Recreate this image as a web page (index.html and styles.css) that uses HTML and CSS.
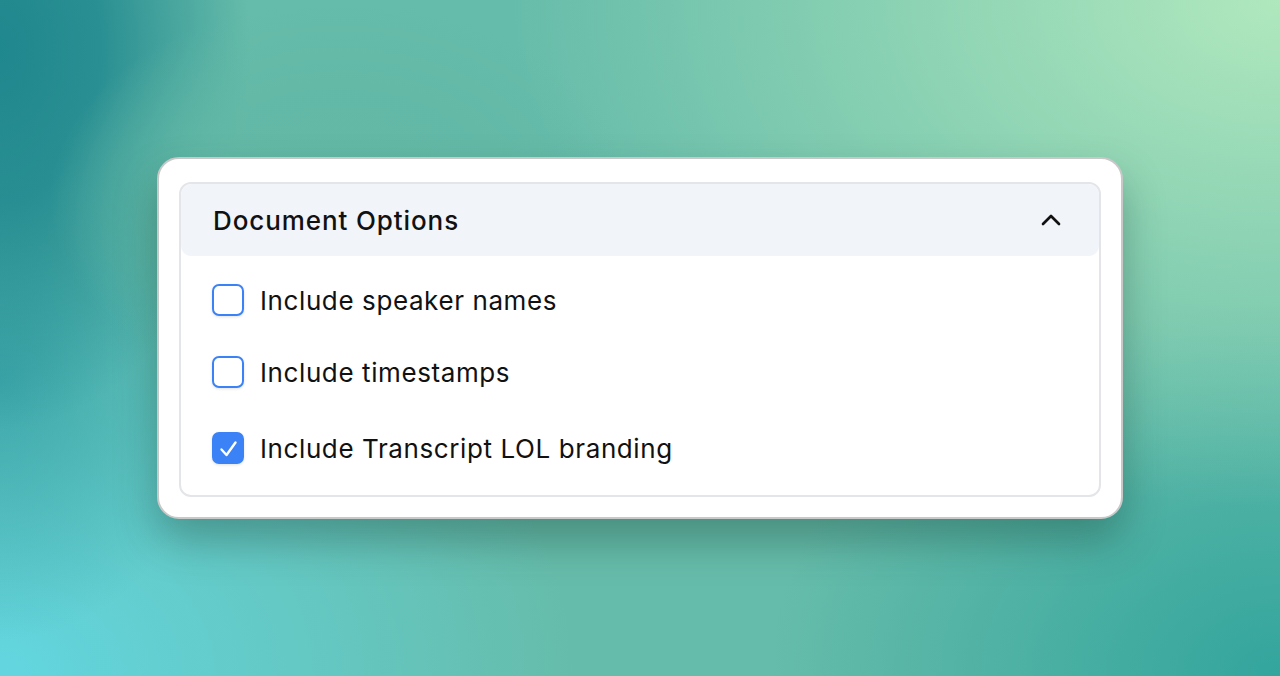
FILE: index.html
```html
<!DOCTYPE html>
<html lang="en">
<head>
    <meta charset="UTF-8">
    <meta name="viewport" content="width=device-width, initial-scale=1.0">
    <title>Document Options</title>
    <link rel="stylesheet" href="styles.css">
</head>
<body>
    <div class="card">
        <div class="panel">
            <div class="panel-header">
                <h2>Document Options</h2>
                <svg class="chevron" width="32" height="32" viewBox="0 0 24 24" fill="none" stroke="currentColor" stroke-width="2" stroke-linecap="round" stroke-linejoin="round">
                    <path d="m18 15-6-6-6 6"/>
                </svg>
            </div>

            <div class="panel-body">
                <label class="option">
                    <span class="box"></span>
                    Include speaker names
                </label>
                <label class="option">
                    <span class="box"></span>
                    Include timestamps
                </label>
                <label class="option option-last">
                    <span class="box checked">
                        <svg width="28" height="28" viewBox="0 0 28 28" fill="none" stroke="#fff" stroke-width="2.4" stroke-linecap="round" stroke-linejoin="round">
                            <path d="M7.5 15.5 12.5 21 21.5 8.5"/>
                        </svg>
                    </span>
                    Include Transcript LOL branding
                </label>
            </div>
        </div>
    </div>
</body>
</html>
```

FILE: styles.css
```css
* {
    box-sizing: border-box;
}

body {
    margin: 0;
    height: 100vh;
    display: flex;
    align-items: center;
    justify-content: center;
    font-family: 'Inter', 'Noto Sans', sans-serif;
    color: #111;
    background:
        radial-gradient(ellipse 290px 200px at 340px 200px, rgba(98,184,165,0.95) 0%, rgba(98,184,165,0.8) 55%, rgba(98,184,165,0) 100%),
        radial-gradient(ellipse 250px 380px at 0px 50px, #1f878e 0%, rgba(31,135,142,0.85) 40%, rgba(31,135,142,0) 100%),
        radial-gradient(ellipse 220px 260px at 0px 380px, rgba(52,160,166,0.8) 0%, rgba(52,160,166,0) 100%),
        radial-gradient(ellipse 60% 75% at 100% 0%, #b0e8bd 0%, rgba(176,232,189,0) 100%),
        radial-gradient(ellipse 45% 65% at 0% 100%, #62d6e0 0%, rgba(98,214,224,0) 100%),
        radial-gradient(ellipse 40% 55% at 100% 100%, #33a59d 0%, rgba(51,165,157,0) 100%),
        #66bcaa;
}

.card {
    width: 966px;
    background: #fff;
    border: 2px solid #c8c8c8;
    border-radius: 22px;
    padding: 23px 20px 20px;
    box-shadow: 0 22px 40px rgba(20, 60, 50, 0.35);
}

.panel {
    border: 2px solid #e4e5e9;
    border-radius: 12px;
    overflow: hidden;
}

.panel-header {
    height: 72px;
    display: flex;
    align-items: center;
    justify-content: space-between;
    padding: 0 32px;
    background: #f1f4f9;
    border-radius: 10px;
}

.panel-header h2 {
    margin: 0;
    font-size: 26px;
    font-weight: 500;
    letter-spacing: 0.9px;
}

.chevron {
    color: #111;
}

.panel-body {
    display: flex;
    flex-direction: column;
    gap: 40px;
    padding: 28px 31px 31px;
}

.option {
    display: flex;
    align-items: center;
    gap: 16px;
    height: 32px;
    font-size: 26px;
    letter-spacing: 0.6px;
    cursor: pointer;
}

.option-last {
    margin-top: 4px;
}

.box {
    width: 32px;
    height: 32px;
    flex-shrink: 0;
    border: 2px solid #3b82f6;
    border-radius: 7px;
    background: #fff;
    box-shadow: 0 1px 3px rgba(0, 0, 0, 0.12);
}

.box svg {
    display: block;
}

.box.checked {
    background: #3b82f6;
}
```
